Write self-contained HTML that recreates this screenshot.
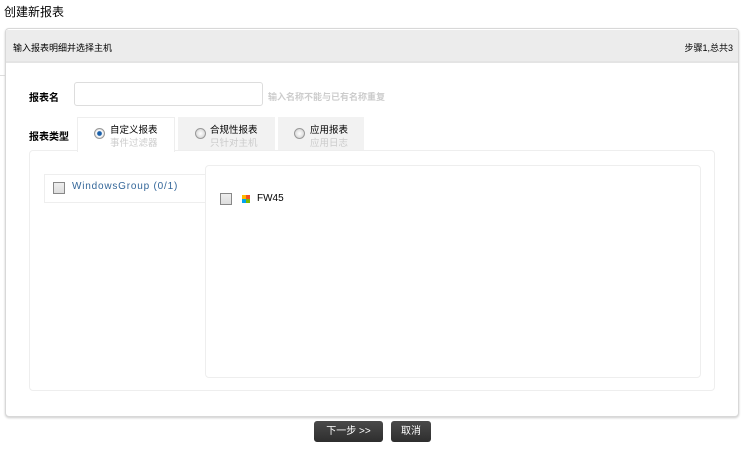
<!DOCTYPE html>
<html><head><meta charset="utf-8"><style>
*{margin:0;padding:0;box-sizing:border-box}
body{width:743px;height:449px;background:#fff;font-family:"Liberation Sans","Noto Sans CJK SC",sans-serif;position:relative;overflow:hidden;font-size:10px;color:#000}
.a{position:absolute}
.cb{position:absolute;width:12px;height:12px;border:1px solid #888;background:linear-gradient(#eee,#ddd)}
.radio{position:absolute;width:11px;height:11px;border-radius:50%;border:1px solid #999;background:radial-gradient(#fff,#ccc)}
.btn{position:absolute;height:21px;border-radius:3px;background:linear-gradient(#4a4a4a,#2e2e2e);color:#fff;font-size:10px;text-align:center;line-height:21px}
</style></head><body>
<div class="a" style="left:4px;top:3px;font-size:12px">创建新报表</div>
<div class="a" style="left:0;top:75px;width:5px;height:1px;background:#ddd"></div>
<div class="a" style="left:5px;top:28px;width:734px;height:389px;border:1px solid #d8d8d8;border-radius:4px;box-shadow:0 1px 2px #ccc;background:#fff"></div>
<div class="a" style="left:6px;top:30px;width:732px;height:33px;background:#ececec;border-bottom:2px solid #e4e4e4"></div>
<div class="a" style="left:13px;top:41px;font-size:9px">输入报表明细并选择主机</div>
<div class="a" style="right:10px;top:41px;font-size:9px">步骤1,总共3</div>
<div class="a" style="left:29px;top:89px;font-weight:bold;font-size:10px">报表名</div>
<div class="a" style="left:74px;top:82px;width:189px;height:24px;border:1px solid #ddd;border-radius:3px"></div>
<div class="a" style="left:268px;top:90px;color:#ccc;font-weight:bold;font-size:9px">输入名称不能与已有名称重复</div>
<div class="a" style="left:29px;top:128px;font-weight:bold;font-size:10px">报表类型</div>
<div class="a" style="left:29px;top:150px;width:686px;height:241px;border:1px solid #eee;border-radius:4px"></div>
<div class="a" style="left:77px;top:117px;width:98px;height:35px;background:#fff;border:1px solid #eee;border-bottom:none"></div>
<div class="a" style="left:178px;top:117px;width:97px;height:33px;background:#f2f2f2"></div>
<div class="a" style="left:278px;top:117px;width:86px;height:33px;background:#f2f2f2"></div>
<div class="radio" style="left:94px;top:128px;background:radial-gradient(#1a5fa8 30%,#fff 45%,#bbb)"></div>
<div class="a" style="left:110px;top:122px;font-size:9.5px">自定义报表</div>
<div class="a" style="left:110px;top:135px;font-size:9.5px;color:#ccc">事件过滤器</div>
<div class="radio" style="left:195px;top:128px"></div>
<div class="a" style="left:210px;top:122px;font-size:9.5px">合规性报表</div>
<div class="a" style="left:210px;top:135px;font-size:9.5px;color:#ccc">只针对主机</div>
<div class="radio" style="left:294px;top:128px"></div>
<div class="a" style="left:310px;top:122px;font-size:9.5px">应用报表</div>
<div class="a" style="left:310px;top:135px;font-size:9.5px;color:#ccc">应用日志</div>
<div class="a" style="left:44px;top:174px;width:165px;height:29px;border:1px solid #eee;border-right:none"></div>
<div class="cb" style="left:53px;top:182px"></div>
<div class="a" style="left:72px;top:181px;color:#336699;font-size:10px;letter-spacing:0.8px">WindowsGroup (0/1)</div>
<div class="a" style="left:205px;top:165px;width:496px;height:213px;border:1px solid #eee;border-radius:4px;background:#fff"></div>
<div class="cb" style="left:220px;top:193px"></div>
<div class="a" style="left:242px;top:195px;width:8px;height:8px;background:conic-gradient(#f25022 0 25%,#7fba00 0 50%,#00a4ef 0 75%,#ffb900 0)"></div>
<div class="a" style="left:257px;top:193px;font-size:10px">FW45</div>
<div class="btn" style="left:314px;top:421px;width:69px">下一步 &gt;&gt;</div>
<div class="btn" style="left:391px;top:421px;width:40px">取消</div>
</body></html>
